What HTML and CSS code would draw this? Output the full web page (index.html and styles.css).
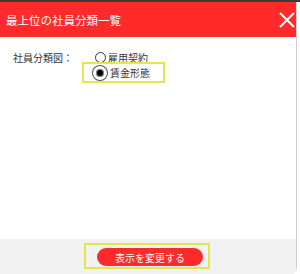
FILE: index.html
```html
<!DOCTYPE html>
<html lang="ja">
<head>
    <meta charset="UTF-8">
    <title>最上位の社員分類一覧</title>
    <link rel="stylesheet" href="styles.css">
</head>
<body>
    <div class="topline"></div>
    <div class="dialog">
        <div class="dialog-header">
            <span class="dialog-title">最上位の社員分類一覧</span>
            <svg class="close" width="16" height="16" viewBox="0 0 16 16">
                <path d="M1 1 L15 15 M15 1 L1 15" stroke="#fff" stroke-width="2" fill="none"/>
            </svg>
        </div>
        <div class="dialog-body">
            <div class="form-row">
                <div class="form-label">社員分類図：</div>
                <div class="options">
                    <div class="option">
                        <span class="radio"></span>
                        <span>雇用契約</span>
                    </div>
                    <div class="option option-selected highlight">
                        <span class="radio radio-on"></span>
                        <span>賃金形態</span>
                    </div>
                </div>
            </div>
        </div>
        <div class="dialog-footer">
            <div class="highlight btn-wrap">
                <button class="btn">表示を変更する</button>
            </div>
        </div>
    </div>
</body>
</html>
```

FILE: styles.css
```css
body {
    margin: 0;
    font-family: "Noto Sans CJK JP", "Liberation Sans", sans-serif;
    background: #fff;
    width: 300px;
    height: 274px;
    overflow: hidden;
}
.topline {
    height: 2px;
    background: #3a3a3a;
}
.dialog {
    width: 296px;
    height: 272px;
    border-right: 1px solid #cfcfcf;
    border-bottom-right-radius: 7px;
    display: flex;
    flex-direction: column;
    overflow: hidden;
}
.dialog-header {
    height: 35px;
    background: #ff2b2b;
    display: flex;
    align-items: center;
    justify-content: space-between;
    padding: 0 1px 0 6px;
}
.dialog-title {
    color: #fff;
    font-size: 11.5px;
}
.close {
    display: block;
}
.dialog-body {
    flex: 1;
    padding: 14px 0 0 13px;
}
.form-row {
    display: flex;
    font-size: 10px;
    color: #333;
}
.form-label {
    width: 69px;
    line-height: 14px;
}
.options {
    display: flex;
    flex-direction: column;
}
.option {
    display: flex;
    align-items: center;
    gap: 2px;
    height: 13px;
    padding-left: 13px;
}
.option-selected {
    height: 17px;
    margin-top: -2px;
    padding: 0 13px 0 9px;
    gap: 3px;
}
.radio {
    width: 9px;
    height: 9px;
    border: 1px solid #333;
    border-radius: 50%;
    background: #fff;
}
.radio-on {
    width: 8px;
    height: 8px;
    border: 3px solid #fff;
    background: #000;
    box-shadow: 0 0 0 1px #555, inset 0 0 0 1px #888;
}
.highlight {
    border: 2px solid #e6e64c;
}
.dialog-footer {
    height: 35px;
    background: #f2f2f2;
    display: flex;
    justify-content: center;
    align-items: flex-start;
    padding-top: 4px;
    box-sizing: border-box;
}
.btn-wrap {
    padding: 3px 5px 1px 11px;
    margin-left: -2px;
}
.btn {
    display: block;
    width: 106px;
    height: 18px;
    border: none;
    border-radius: 9px;
    background: #ff2b2b;
    color: #fff;
    font-family: "Noto Sans CJK JP", sans-serif;
    font-size: 10px;
    padding: 0;
}
```
